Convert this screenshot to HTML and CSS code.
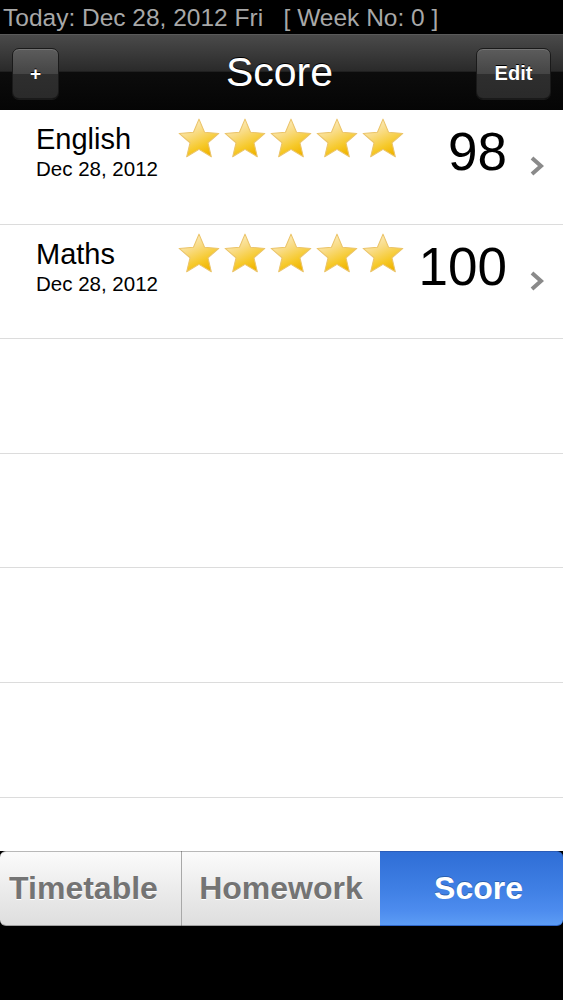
FILE: index.html
```html
<!DOCTYPE html>
<html>

<head>
    <title>Score</title>
    <link rel="stylesheet" href="styles.css">
</head>

<body>
    <svg width="0" height="0" class="defs">
        <defs>
            <linearGradient id="starFill" x1="0.1" y1="0" x2="0.6" y2="1">
                <stop offset="0" stop-color="#fdf3d6" />
                <stop offset="0.4" stop-color="#f9dc86" />
                <stop offset="0.75" stop-color="#f6c92a" />
                <stop offset="1" stop-color="#f0b400" />
            </linearGradient>
            <symbol id="star" viewBox="0 0 44 44">
                <path d="M22 3 L27.3 15.6 L41 16.7 L30.6 25.6 L33.8 39 L22 31.9 L10.2 39 L13.4 25.6 L3 16.7 L16.7 15.6 Z"
                    fill="url(#starFill)" stroke="#ebc46a" stroke-width="1" stroke-linejoin="round" />
            </symbol>
        </defs>
    </svg>

    <div class="statusBar">Today: Dec 28, 2012 Fri &nbsp;&nbsp;[ Week No: 0 ]</div>

    <div class="navBar">
        <button class="navButton">+</button>
        <div class="navTitle">Score</div>
        <button class="navButton wide">Edit</button>
    </div>

    <div class="scoreList">
        <div class="scoreRow">
            <div class="subject">
                <div class="subjectName">English</div>
                <div class="subjectDate">Dec 28, 2012</div>
            </div>
            <div class="stars">
                <svg><use href="#star" /></svg>
                <svg><use href="#star" /></svg>
                <svg><use href="#star" /></svg>
                <svg><use href="#star" /></svg>
                <svg><use href="#star" /></svg>
            </div>
            <div class="scoreValue">98</div>
            <svg class="chevron" viewBox="0 0 18 22"><path d="M4 3 L13 11 L4 19" /></svg>
        </div>
        <div class="scoreRow">
            <div class="subject">
                <div class="subjectName">Maths</div>
                <div class="subjectDate">Dec 28, 2012</div>
            </div>
            <div class="stars">
                <svg><use href="#star" /></svg>
                <svg><use href="#star" /></svg>
                <svg><use href="#star" /></svg>
                <svg><use href="#star" /></svg>
                <svg><use href="#star" /></svg>
            </div>
            <div class="scoreValue">100</div>
            <svg class="chevron" viewBox="0 0 18 22"><path d="M4 3 L13 11 L4 19" /></svg>
        </div>
        <div class="scoreRow"></div>
        <div class="scoreRow"></div>
        <div class="scoreRow"></div>
        <div class="scoreRow"></div>
        <div class="scoreRow"></div>
    </div>

    <div class="tabBar">
        <div class="tab first">Timetable</div>
        <div class="tab">Homework</div>
        <div class="tab active">Score</div>
    </div>

    <div class="bottomSpace"></div>
</body>

</html>
```

FILE: styles.css
```css
body {
    margin: 0;
    font-family: "Liberation Sans", Arial, sans-serif;
    background-color: #000000;
    width: 563px;
    height: 1000px;
    overflow: hidden;
}

.defs {
    position: absolute;
}

.statusBar {
    height: 34px;
    line-height: 36px;
    padding-left: 3px;
    font-size: 24.5px;
    color: #a8a8a8;
    background-color: #000000;
    white-space: nowrap;
}

.navBar {
    height: 76px;
    display: flex;
    align-items: center;
    justify-content: space-between;
    padding: 0 12px;
    background: linear-gradient(#4a4a4a 0%, #2a2a2a 48%, #0c0c0c 50%, #050505 100%);
    border-top: 1px solid #5a5a5a;
    box-sizing: border-box;
}

.navButton {
    height: 51px;
    width: 47px;
    padding: 0;
    margin-top: 2px;
    font-family: "Liberation Sans", Arial, sans-serif;
    font-size: 19px;
    font-weight: bold;
    color: #ffffff;
    border: 1px solid #1a1a1a;
    border-radius: 7px;
    background: linear-gradient(#5c5c5c 0%, #454545 50%, #2e2e2e 52%, #2a2a2a 100%);
    box-shadow: inset 0 1px 0 rgba(255, 255, 255, 0.15), 0 1px 0 rgba(255, 255, 255, 0.08);
    text-shadow: 0 -1px 0 #000000;
}

.navButton.wide {
    width: 75px;
    font-size: 20px;
}

.navTitle {
    font-size: 41px;
    color: #ffffff;
    margin-left: 24px;
    text-shadow: 0 -1px 0 #000000;
}

.scoreList {
    background-color: #ffffff;
    height: 741px;
    overflow: hidden;
}

.scoreRow {
    height: 113.6px;
    border-bottom: 1px solid #dcdcdc;
    display: flex;
    align-items: flex-start;
}

.subject {
    width: 140px;
    padding-left: 36px;
    padding-top: 13px;
}

.subjectName {
    font-size: 29px;
    line-height: 32px;
    color: #000000;
}

.subjectDate {
    font-size: 20.5px;
    line-height: 28px;
    color: #000000;
}

.stars {
    display: flex;
    padding-top: 6px;
}

.stars svg {
    width: 46px;
    height: 46px;
}

.scoreValue {
    flex: 1;
    text-align: right;
    font-size: 53px;
    line-height: 60px;
    padding-top: 12px;
    color: #000000;
}

.chevron {
    width: 18px;
    height: 22px;
    margin: 45px 17px 0 21px;
    fill: none;
    stroke: #8a8a8a;
    stroke-width: 4;
}

.tabBar {
    display: flex;
    height: 75px;
    background-color: #000000;
}

.tab {
    display: flex;
    align-items: center;
    justify-content: center;
    font-size: 32px;
    font-weight: bold;
    color: #747474;
    text-shadow: 0 1px 0 #ffffff;
    background: linear-gradient(#fbfbfb 0%, #ececec 50%, #dedede 100%);
    border-top: 1px solid #b8b8b8;
    border-bottom: 1px solid #a0a0a0;
    box-sizing: border-box;
}

.tab.first {
    width: 182px;
    padding-right: 14px;
    border-right: 1px solid #a8a8a8;
    border-radius: 6px 0 0 6px;
}

.tab:nth-child(2) {
    width: 198px;
}

.tab.active {
    flex: 1;
    padding-left: 14px;
    color: #ffffff;
    text-shadow: 0 -1px 0 #2a5fb0;
    background: linear-gradient(#2f6ed6 0%, #3f7fe4 50%, #4d8cee 80%, #5c9cf5 100%);
    border-top: 1px solid #2a5cb8;
    border-bottom: 1px solid #2f66c8;
    border-radius: 0 6px 6px 0;
}

.bottomSpace {
    height: 74px;
    background-color: #000000;
}
```
